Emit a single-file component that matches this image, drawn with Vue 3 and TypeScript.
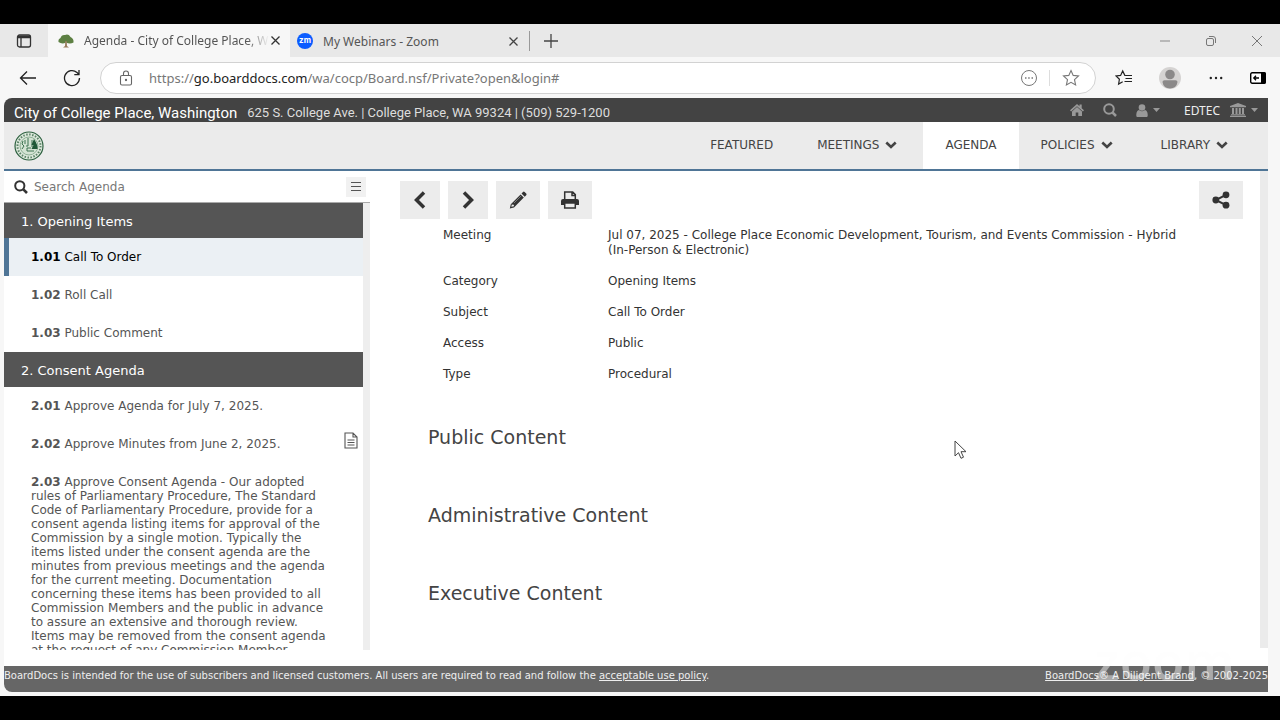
<script setup lang="ts">
interface AgendaItem { num: string; text: string; active?: boolean; file?: boolean }
interface Section { title: string; items: AgendaItem[] }

const sections: Section[] = [
  {
    title: '1. Opening Items',
    items: [
      { num: '1.01', text: 'Call To Order', active: true },
      { num: '1.02', text: 'Roll Call' },
      { num: '1.03', text: 'Public Comment' },
    ],
  },
  {
    title: '2. Consent Agenda',
    items: [
      { num: '2.01', text: 'Approve Agenda for July 7, 2025.' },
      { num: '2.02', text: 'Approve Minutes from June 2, 2025.', file: true },
      {
        num: '2.03',
        text: 'Approve Consent Agenda - Our adopted rules of Parliamentary Procedure, The Standard Code of Parliamentary Procedure, provide for a consent agenda listing items for approval of the Commission by a single motion. Typically the items listed under the consent agenda are the minutes from previous meetings and the agenda for the current meeting. Documentation concerning these items has been provided to all Commission Members and the public in advance to assure an extensive and thorough review. Items may be removed from the consent agenda at the request of any Commission Member.',
      },
    ],
  },
]

const nav = [
  { label: 'FEATURED', menu: false, active: false },
  { label: 'MEETINGS', menu: true, active: false },
  { label: 'AGENDA', menu: false, active: true },
  { label: 'POLICIES', menu: true, active: false },
  { label: 'LIBRARY', menu: true, active: false },
]

const details = [
  ['Meeting', 'Jul 07, 2025 - College Place Economic Development, Tourism, and Events Commission - Hybrid (In-Person & Electronic)'],
  ['Category', 'Opening Items'],
  ['Subject', 'Call To Order'],
  ['Access', 'Public'],
  ['Type', 'Procedural'],
]

const headings = ['Public Content', 'Administrative Content', 'Executive Content']
</script>

<template>
  <div class="screen">
    <div class="browser">
      <div class="tabs">
        <button class="tab-menu" aria-label="Tab actions">
          <svg width="16" height="16" viewBox="0 0 16 16" fill="none" stroke="#333" stroke-width="1.3"><rect x="1.5" y="2" width="13" height="12" rx="2" /><path d="M1.5 4.5h13M5 5v9" /><path d="M2 3.5h12" stroke-width="2" /></svg>
        </button>
        <div class="tab current">
          <svg width="16" height="16" viewBox="0 0 16 16"><path d="M0.500 9 Q0 6 2.500 5 Q3.500 1.500 7 2 Q10.500 0.500 12.500 4 Q16 5.500 15.500 9.500 Q12 11.500 8 9.500 Q4 11.500 .5 9z" fill="#5d8043" /><path d="M7.300 8 L8.700 8 L9 13 L11 14.500 H5 L7 13z" fill="#987c5d" /></svg>
          <span class="tab-title faded">Agenda - City of College Place, W</span>
          <button class="close" aria-label="Close tab"><svg width="9" height="9" viewBox="0 0 9 9" stroke="#333" stroke-width="1.3"><path d="M.5.5l8 8M8.500.5l-8 8" /></svg></button>
        </div>
        <div class="tab second">
          <span class="zm">zm</span>
          <span class="tab-title">My Webinars - Zoom</span>
          <button class="close" aria-label="Close tab"><svg width="9" height="9" viewBox="0 0 9 9" stroke="#444" stroke-width="1.3"><path d="M.5.5l8 8M8.500.5l-8 8" /></svg></button>
        </div>
        <button class="new-tab" aria-label="New tab"><svg width="14" height="14" viewBox="0 0 14 14" stroke="#444" stroke-width="1.3"><path d="M7 0v14M0 7h14" /></svg></button>
        <div class="window-buttons">
          <button aria-label="Minimize"><svg width="12" height="12" viewBox="0 0 12 12" stroke="#888" fill="none"><path d="M1 6h10" /></svg></button>
          <button aria-label="Restore"><svg width="12" height="12" viewBox="0 0 12 12" stroke="#777" fill="none"><rect x="1.500" y="3.500" width="7" height="7" rx="1.500" /><path d="M4 1.500h4q2.500 0 2.500 2.500v4" /></svg></button>
          <button aria-label="Close"><svg width="12" height="12" viewBox="0 0 12 12" stroke="#777" fill="none"><path d="M1 1l10 10M11 1L1 11" /></svg></button>
        </div>
      </div>

      <div class="toolbar">
        <button aria-label="Back"><svg width="18" height="16" viewBox="0 0 18 16" fill="none" stroke="#222" stroke-width="1.300"><path d="M17 8H1.500M8 1.500L1.500 8 8 14.500" /></svg></button>
        <button class="reload" aria-label="Refresh"><svg width="18" height="18" viewBox="0 0 18 18" fill="none" stroke="#222" stroke-width="1.300"><path d="M16.500 9a7.500 7.500 0 1 1-2.500-5.500L16 5.500M16 1v4.700h-4.700" /></svg></button>
        <div class="address">
          <svg width="14" height="16" viewBox="0 0 14 16" fill="none" stroke="#666" stroke-width="1.100"><rect x="1.500" y="5.500" width="11" height="9.500" rx="1.500" /><path d="M4.500 5.500V3.500a2.500 2.500 0 0 1 5 0v2" /><circle cx="7" cy="10" r=".6" fill="#444" /></svg>
          <span class="url">https://<b>go.boarddocs.com</b>/wa/cocp/Board.nsf/Private?open&amp;login#</span>
          <button aria-label="Page options"><svg width="18" height="18" viewBox="0 0 18 18" fill="none" stroke="#777"><circle cx="9" cy="9" r="7.500" /><path d="M5 9h1.500M8.200 9h1.500M11.500 9H13" stroke-width="1.500" /></svg></button>
          <span class="split"></span>
          <button aria-label="Add to favorites"><svg width="18" height="18" viewBox="0 0 18 18" fill="none" stroke="#777" stroke-width="1.100"><path d="M9 1.500l2.200 4.900 5.300.6-4 3.600 1.100 5.400L9 13.300 4.400 16l1.100-5.400-4-3.600 5.300-.6z" /></svg></button>
        </div>
        <button class="favorites" aria-label="Favorites"><svg width="18" height="18" viewBox="0 0 18 18" fill="none" stroke="#222" stroke-width="1.200"><path d="M10 6.300h-.2L7.700 2 5.600 6.400 1 7l3.400 3.300L3.600 15l4.100-2.300M10 6.500h7M10.500 9.500H17M9.500 12.500H17" /></svg></button>
        <button aria-label="Profile"><svg width="22" height="22" viewBox="0 0 22 22"><circle cx="11" cy="11" r="11" fill="#d5d3d2" /><circle cx="11" cy="7.500" r="4.800" fill="#8b8989" /><path d="M3.500 15q0-1.800 2-1.800h11q2 0 2 1.800-1 6.500-7.500 6.500T3.500 15z" fill="#8b8989" /></svg></button>
        <button aria-label="More"><svg width="14" height="4" viewBox="0 0 14 4" fill="#222"><circle cx="1.800" cy="2" r="1.200" /><circle cx="7" cy="2" r="1.200" /><circle cx="12.200" cy="2" r="1.200" /></svg></button>
        <button aria-label="Sidebar"><svg width="16" height="12" viewBox="0 0 16 12"><rect x=".7" y=".7" width="14.600" height="10.600" rx="1.500" fill="#fff" stroke="#000" stroke-width="1.400" /><path d="M11 0h3a2 2 0 0 1 2 2v8a2 2 0 0 1-2 2h-3z" /><path d="M9 6H4M6 3.800L3.800 6 6 8.200" fill="none" stroke="#000" stroke-width="1.300" /></svg></button>
      </div>

      <div class="page">
        <header class="org">
          <span class="org-name">City of College Place, Washington</span>
          <span class="org-address">625 S. College Ave. | College Place, WA 99324 | (509) 529-1200</span>
          <div class="org-tools">
            <button aria-label="Home"><svg width="14" height="12" viewBox="0 0 14 12" fill="#999"><path d="M7 0l2.500 2.200V.6h2.200v3.600L14 6.300l-1.100 1.200L7 2.300 1.100 7.500 0 6.300z" /><path d="M7 3.100l5 4.300V12H8.300V8.500H5.700V12H2V7.400z" /></svg></button>
            <button aria-label="Search"><svg width="14" height="14" viewBox="0 0 14 14" fill="none" stroke="#999" stroke-width="2"><circle cx="6" cy="6" r="4.800" /><path d="M9.500 9.500L13 13" stroke-width="2.500" /></svg></button>
            <button class="user" aria-label="Account"><svg width="12" height="13" viewBox="0 0 12 13" fill="#999"><circle cx="6" cy="3.500" r="3.300" /><path d="M3 6q3 2.500 6 0 2.500.5 2.700 4.500v1.300q0 1.200-1.200 1.200h-9Q.3 13 .3 11.800v-1.300Q.5 6.500 3 6z" /></svg><svg width="7" height="4" viewBox="0 0 7 4" fill="#999"><path d="M0 0h7L3.500 4z" /></svg></button>
            <button class="edtec"><span>EDTEC</span><svg width="16" height="14" viewBox="0 0 16 14" fill="#999"><path d="M8 0l8 3v1.200H0V3zM2 5h2v6H2zM5.500 5h2v6h-2zM8.800 5h2v6h-2zM12 5h2v6h-2zM1 11.300h14v1H1zM0 12.800h16V14H0z" /></svg><svg width="7" height="4" viewBox="0 0 7 4" fill="#999"><path d="M0 0h7L3.500 4z" /></svg></button>
          </div>
        </header>

        <nav class="nav">
          <svg class="seal" width="30" height="30" viewBox="0 0 30 30" fill="none"><circle cx="15" cy="15" r="14" fill="#dce8dc" stroke="#2e6140" stroke-width="1.200" /><circle cx="15" cy="15" r="11.500" stroke="#5c8467" stroke-width="2" stroke-dasharray="1.500 1.500" /><circle cx="15" cy="15" r="9" fill="#d3e3d3" stroke="#8fb096" /><path d="M14 7v8h-2M9 10l-1 3 2 2-2 3M17 17h-4v3h7M18 9v7M11 9v4" stroke="#3d7350" /><path d="M20 8l-2.500 6h2l-2 4h6q.5-4-3.500-10z" fill="#1f5937" /></svg>
          <a v-for="n in nav" :key="n.label" href="#" :class="{ active: n.active, menu: n.menu }">{{ n.label }}<svg v-if="n.menu" width="12" height="8" viewBox="0 0 12 8" fill="none" stroke="#444" stroke-width="2.600"><path d="M1.300 1.500L6 6l4.700-4.500" /></svg></a>
        </nav>

        <div class="body">
          <aside class="side">
            <div class="search">
              <label for="agenda-search" aria-label="Search Agenda"><svg width="14" height="14" viewBox="0 0 14 14" fill="none" stroke="#333" stroke-width="2"><circle cx="5.800" cy="5.800" r="4.600" /><path d="M9.300 9.300L13 13" stroke-width="2.600" /></svg></label>
              <input id="agenda-search" type="text" placeholder="Search Agenda" />
              <button aria-label="Agenda menu"><svg width="10" height="9" viewBox="0 0 10 9" stroke="#555"><path d="M0 .5h10M0 4.500h10M0 8.500h10" /></svg></button>
            </div>
            <div class="list">
              <div class="list-content">
                <section v-for="s in sections" :key="s.title">
                  <h2>{{ s.title }}</h2>
                  <a v-for="i in s.items" :key="i.num" href="#" class="item" :class="{ active: i.active }">
                    <span class="item-text"><b>{{ i.num }}</b> {{ i.text }}</span>
                    <svg v-if="i.file" width="14" height="17" viewBox="0 0 14 17" fill="none" stroke="#555" stroke-width="1.100"><path d="M1 1h8l4 4v11H1zM9 1v4h4M3.500 8h7M3.500 10.500h7M3.500 13h7" /></svg>
                  </a>
                </section>
              </div>
              <div class="track"></div>
            </div>
          </aside>

          <main class="main">
            <div class="actions">
              <button aria-label="Previous"><svg width="14" height="18" viewBox="0 0 14 18" fill="none" stroke="#333" stroke-width="3.500"><path d="M11 1.500L3.500 9l7.500 7.500" /></svg></button>
              <button aria-label="Next"><svg width="14" height="18" viewBox="0 0 14 18" fill="none" stroke="#333" stroke-width="3.500"><path d="M3 1.500L10.500 9 3 16.500" /></svg></button>
              <button class="wide" aria-label="Edit"><svg width="18" height="18" viewBox="0 0 18 18" fill="#333"><path d="M12.500 2.500l1.500-1.500q.8-.8 1.600 0l1.600 1.600q.8.8 0 1.600L15.700 5.700zM11.600 3.400l3.200 3.200L5 16.400l-4.200 1 1-4.200z" /><path d="M2.900 13.200l-.6 2.600 2.600-.6v-1.400H3.600z" fill="#eee" /><path d="M5 12l7-7" stroke="#999" stroke-width=".7" /></svg></button>
              <button class="wide" aria-label="Print"><svg width="18" height="18" viewBox="0 0 18 18" fill="none" stroke="#333" stroke-width="1.500"><path d="M3.700 8V1h8l2.600 2.600V8M11 1v3.500h3" /><path d="M0 14V10q0-2 2-2h14q2 0 2 2v4h-3.500v-2h-11v2z" fill="#333" stroke="none" /><path d="M3.700 12h10.600v5H3.700z" fill="#eee" /></svg></button>
              <button class="wide share" aria-label="Share"><svg width="18" height="18" viewBox="0 0 18 18" fill="#333"><circle cx="3.800" cy="9" r="3.400" /><circle cx="14" cy="3.800" r="3.400" /><circle cx="14" cy="14.200" r="3.400" /><path d="M14 3.800L3.800 9 14 14.200" fill="none" stroke="#333" stroke-width="2" /></svg></button>
            </div>
            <dl class="details">
              <template v-for="d in details" :key="d[0]"><dt>{{ d[0] }}</dt><dd>{{ d[1] }}</dd></template>
            </dl>
            <h3 v-for="h in headings" :key="h">{{ h }}</h3>
          </main>
          <div class="page-track"></div>
        </div>

        <footer class="footer">
          <span>BoardDocs is intended for the use of subscribers and licensed customers. All users are required to read and follow the <a href="#">acceptable use policy</a>.</span>
          <span class="copyright"><a href="#">BoardDocs® A Diligent Brand</a>, © 2002-2025</span>
        </footer>
      </div>
    </div>
    <svg class="cursor" width="13" height="20" viewBox="0 0 13 20"><path d="M1 1v15l3.500-3.300L7 18.300l2.500-1.100L7 11.700h5z" fill="#fff" stroke="#444" /></svg>
    <div class="watermark" aria-hidden="true">zoom</div>
  </div>
</template>

<style>
body { margin: 0; background: #000; }
</style>

<style scoped>
* { box-sizing: border-box; }
.screen { position: relative; height: 100vh; padding: 24px 0; background: #000; font-family: "DejaVu Sans", sans-serif; font-size: 13px; overflow: hidden; }
.browser { height: 100%; display: flex; flex-direction: column; background: #f7f7f7; }
button { border: 0; padding: 0; margin: 0; background: none; font: inherit; color: inherit; display: flex; align-items: center; justify-content: center; flex: none; }
svg { display: block; flex: none; }
a { color: inherit; }
h2, h3, dl, dd { margin: 0; font-weight: 400; }

.tabs { flex: none; height: 33px; display: flex; align-items: stretch; background: #e8e8e8; font-family: "Noto Sans", sans-serif; font-size: 12px; color: #555; }
.tab-menu { width: 48px; }
.tab { display: flex; align-items: center; gap: 10px; }
.current { width: 242px; padding: 0 10px; background: #f7f7f7; }
.tab-title { flex: 1; min-width: 0; white-space: nowrap; overflow: hidden; }
.faded { margin-right: -8px; mask-image: linear-gradient(to right, #000 88%, transparent); }
.second { width: 240px; padding: 0 11px 0 7px; border-right: 1px solid #999; margin: 7px 0 6px; }
.zm { width: 16px; height: 16px; border-radius: 50%; background: #0b5cff; color: #fff; font: 700 8px/15px "Inter", sans-serif; text-align: center; }
.new-tab { width: 42px; }
.window-buttons { margin-left: auto; display: flex; }
.window-buttons button { width: 46px; }

.toolbar { flex: none; height: 41px; display: flex; align-items: center; padding: 0 3px 0 18px; }
.toolbar > button { width: 46px; }
.toolbar > button:first-child { width: 20px; }
.toolbar > .reload { width: 68px; margin-right: -6px; }
.toolbar > button:last-child { width: 38px; }
.address { flex: 1; min-width: 0; height: 32px; display: flex; align-items: center; padding: 0 15px 0 18px; border: 1px solid #d2d2d2; border-radius: 16px; background: #fff; }
.url { flex: 1; min-width: 0; margin-left: 16px; font-family: "Noto Sans", sans-serif; font-size: 13px; color: #777; white-space: nowrap; overflow: hidden; }
.url b { font-weight: 400; color: #222; }
.split { width: 1px; height: 16px; margin: 0 12px 0 11px; background: #ddd; }
.favorites { margin-left: 5px; }

.page { flex: 1; min-height: 0; margin: 0 12px 4px 4px; display: flex; flex-direction: column; background: #fff; border-radius: 8px 0 0 8px; overflow: hidden; }
.org { flex: none; height: 24px; padding: 6px 10px 0; display: flex; align-items: center; gap: 10px; background: #434343; color: #fff; font-family: Roboto, sans-serif; white-space: nowrap; line-height: 18px; }
.org-name { font-size: 15px; }
.org-address { font-size: 13px; color: #ddd; }
.org-tools { margin: -6px 0 0 auto; display: flex; align-items: center; gap: 19px; }
.user, .edtec { gap: 5px; }
.edtec { margin-left: 5px; font: 12px "Noto Sans", sans-serif; color: #eee; }
.edtec span { margin-right: 5px; }

.nav { flex: none; height: 49px; display: flex; align-items: stretch; padding: 0 14px 0 10px; background: #ebebeb; border-bottom: 2px solid #4f7596; color: #444; }
.seal { align-self: center; margin-right: auto; }
.nav a { display: flex; align-items: center; gap: 6px; padding: 0 22px 2px; text-decoration: none; font-size: 12px; }
.nav a.menu { padding-right: 26px; }
.nav a.active { background: #fff; }

.body { flex: 1; min-height: 0; display: flex; }
.side { flex: none; width: 366px; padding-bottom: 16px; display: flex; flex-direction: column; }
.search { flex: none; height: 31px; display: flex; align-items: center; padding: 0 4px 0 10px; }
.search input { flex: 1; min-width: 0; border: 0; outline: 0; padding: 0; margin-left: 6px; background: none; font: 12px "DejaVu Sans", sans-serif; color: #555; }
.search input::placeholder { color: #777; opacity: 1; }
.search button { width: 20px; height: 20px; background: #f1f1f1; }
.list { flex: 1; min-height: 0; display: flex; border-top: 1px solid #aaa; overflow: hidden; }
.list-content { flex: 1; min-width: 0; }
.track { width: 7px; background: #eee; }
.side h2 { height: 35px; padding-left: 17px; background: #555; color: #fff; font-size: 13px; line-height: 37px; }
.item { display: flex; align-items: flex-start; justify-content: space-between; padding: 12px 5px 12px 27px; text-decoration: none; color: #555; font-size: 12px; line-height: 14px; }
.item-text { width: 300px; }
.item svg { margin: -5px 0 0; }
.item.active { background: #ebf0f4; color: #000; border-left: 5px solid #4f7596; padding-left: 22px; }

.main { flex: 1; min-width: 0; padding: 10px 17px 0 30px; color: #333; overflow: hidden; }
.actions { display: flex; gap: 8px; }
.actions button { width: 40px; height: 38px; background: #ececec; }
.actions .wide { width: 44px; }
.actions .share { margin-left: auto; }
.details { display: grid; grid-template-columns: 165px 1fr; margin: 1px 60px 35px 43px; font-size: 12px; line-height: 15px; }
.details dt, .details dd { padding: 8px 0; }
.main h3 { margin: 0 0 54px 28px; font-size: 19px; line-height: 24px; color: #444; }
.page-track { width: 8px; background: #ebebeb; margin-bottom: 18px; }

.footer { flex: none; height: 26px; display: flex; justify-content: space-between; background: #666; color: #eee; font-size: 10px; line-height: 19px; white-space: nowrap; }
.cursor { position: absolute; left: 954px; top: 440px; }
.watermark { position: absolute; right: 45px; bottom: 32px; font: 600 53px/56px "Open Sans", sans-serif; color: rgba(252, 252, 252, 0.45); }
</style>
